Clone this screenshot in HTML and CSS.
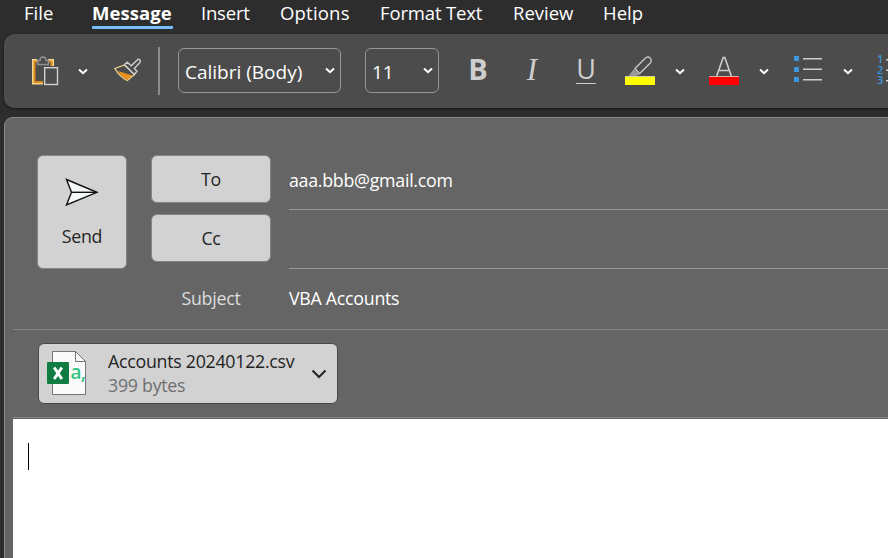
FILE: index.html
```html
<!DOCTYPE html>
<html lang="en">
<head>
<meta charset="utf-8">
<title>VBA Accounts - Message</title>
<link rel="stylesheet" href="styles.css">
</head>
<body>
<nav class="menu">
  <span class="tab file">File</span>
  <span class="tab message active">Message</span>
  <span class="tab insert">Insert</span>
  <span class="tab options">Options</span>
  <span class="tab format">Format Text</span>
  <span class="tab review">Review</span>
  <span class="tab help">Help</span>
</nav>
<div class="ribbon">
  <svg class="paste" width="30" height="32" viewBox="30 55 30 32">
    <path d="M37 60.500H33.500V83H43M48 60.500H52.500V66" fill="none" stroke="#f7d78b" stroke-width="3"/>
    <path d="M37 61.500H34.500V82H43M48 61.500H51.500V66" fill="none" stroke="#dc8a1c" stroke-width="2"/>
    <path d="M37.600 64.500V60.500H40C40 55.700 46 55.700 46 60.500H48.400V64.500Z" fill="#4c4c4c" stroke="#919191" stroke-width="1.500"/>
    <rect x="44.700" y="67.700" width="12.800" height="16.800" fill="#4c4c4c" stroke="#d2d2d2" stroke-width="1.400"/>
  </svg>
  <svg class="chev c1" width="10" height="7" viewBox="0 0 10 7"><path d="M1 1.500L5 5.200L9 1.500"/></svg>
  <svg class="brush" width="30" height="28" viewBox="113 57 30 28">
    <path d="M114.800 68.500L124.500 65L134.500 74.500L127.200 80.500Q119.500 76.500 114.800 68.500Z" fill="#4c4c4c" stroke="#f5d58e" stroke-width="1.300"/>
    <path d="M118 71L132.500 75.500L127.200 80Q121.500 77.200 118 71Z" fill="#e8921e"/>
    <path d="M124.500 64.500L127.300 62.200L131.200 65.700L137.200 59.900C139 58.300 141.500 60.800 139.900 62.600L134.300 68.500L137 71.300L134.300 74.500Z" fill="#4c4c4c" stroke="#cfcfcf" stroke-width="1.400"/>
  </svg>
  <i class="rule"></i>
  <div class="combo font"><span>Calibri (Body)</span><svg class="chev" width="10" height="7" viewBox="0 0 10 7"><path d="M1 1.500L5 5.200L9 1.500"/></svg></div>
  <div class="combo size"><span>11</span><svg class="chev" width="10" height="7" viewBox="0 0 10 7"><path d="M1 1.500L5 5.200L9 1.500"/></svg></div>
  <span class="glyph bold">B</span>
  <span class="glyph italic">I</span>
  <span class="glyph under">U</span>
  <svg class="marker" width="30" height="30" viewBox="625 55 30 30">
    <path d="M635 68.500L645 58.500C648.500 54.800 653.500 59.500 650 63.200L639.500 73.800Z" fill="none" stroke="#c8c8c8" stroke-width="1.400"/>
    <path d="M633.800 69L639.500 74.500L636.500 76H628.500Z" fill="#999"/>
    <path d="M625 76.500H655" stroke="#d0d0a0"/><path d="M625 77H655V85H625Z" fill="#ff0"/>
  </svg>
  <svg class="chev c2" width="10" height="7" viewBox="0 0 10 7"><path d="M1 1.500L5 5.200L9 1.500"/></svg>
  <svg class="color" width="30" height="30" viewBox="709 55 30 30">
    <path d="M716.700 76L723.200 57.500H724.800L731.300 76M719 70.500H729" fill="none" stroke="#cecece" stroke-width="1.600"/>
    <path d="M709 76.500H739" stroke="#d7b0b0"/><path d="M709 77H739V85H709Z" fill="red"/>
  </svg>
  <svg class="chev c3" width="10" height="7" viewBox="0 0 10 7"><path d="M1 1.500L5 5.200L9 1.500"/></svg>
  <svg class="bullets" width="28" height="28" viewBox="794 56 28 28">
    <path d="M794 56H799V61H794ZM794 67H799V72H794ZM794 77H799V82H794Z" fill="#3a96dd"/>
    <path d="M803 58.800H822M803 69.200H822M803 79.800H822" stroke="#cfcfcf" stroke-width="1.500"/>
  </svg>
  <svg class="chev c4" width="10" height="7" viewBox="0 0 10 7"><path d="M1 1.500L5 5.200L9 1.500"/></svg>
  <div class="numbers"><span>1</span><span>2</span><span>3</span></div>
  <svg class="ticks" width="3" height="28" viewBox="0 0 3 28"><path d="M0 3.800H3M0 14.200H3M0 24.800H3" stroke="#cfcfcf" stroke-width="1.500"/></svg>
</div>
<main class="compose">
  <section class="header">
    <div class="send">
      <svg width="34" height="30" viewBox="65 177 34 30"><path d="M66.500 179.500L97 192.300L66.500 205L71.500 192.300Z" fill="#f5f8f8" stroke="#111" stroke-width="1.400"/><path d="M71.500 192.300H96" stroke="#111" stroke-width="1.400"/></svg>
      <span>Send</span>
    </div>
    <div class="labels">
      <div class="btn">To</div>
      <div class="btn">Cc</div>
      <div class="subject">Subject</div>
    </div>
    <div class="fields">
      <div class="field"><span class="addr">aaa.bbb@gmail.com</span></div>
      <div class="field"></div>
      <div class="field last"><span class="title">VBA Accounts</span></div>
    </div>
  </section>
  <section class="attachments">
    <div class="card">
      <svg width="41" height="46" viewBox="46 350 41 46">
        <path d="M52.500 350.500H75.500L85.500 360.500V393.500H52.500Z" fill="#fafafa" stroke="#757575"/>
        <path d="M75.500 350.500V360.500H85.500" fill="none" stroke="#757575"/>
        <rect x="47" y="361" width="22" height="22" rx="1" fill="#107c41"/>
        <path d="M54.200 366.500L61.800 378M61.800 366.500L54.200 378" stroke="#fff" stroke-width="3"/>
        <text x="70.500" y="377.500" class="csv">a,</text>
      </svg>
      <div class="meta"><span class="name">Accounts 20240122.csv</span><span class="bytes">399 bytes</span></div>
      <svg class="open" width="16" height="10" viewBox="0 0 16 10"><path d="M1.500 1.500L8 8L14.500 1.500"/></svg>
    </div>
  </section>
  <div class="body"><i class="caret"></i></div>
</main>
</body>
</html>
```
FILE: styles.css
```css
* { box-sizing: border-box; }
body { margin: 0; width: 888px; height: 558px; overflow: hidden; background: #2d2d2d; color: #fff; font: 18.5px/26px "Open Sans", "Noto Sans", sans-serif; }
span { white-space: nowrap; display: block; }
svg { display: block; flex: none; }
.menu { height: 34px; display: flex; padding-left: 24px; }
.tab { height: 29px; flex: none; }
.file { width: 68px; }
.message { width: 81px; font-weight: 700; letter-spacing: .05px; margin-right: 28px; }
.active { border-bottom: 3px solid #76bdfa; border-radius: 1px; }
.insert { width: 79px; letter-spacing: -.2px; }
.options { width: 100px; letter-spacing: .2px; }
.format { width: 133px; letter-spacing: -.15px; }
.review { width: 90px; }
.ribbon { margin-left: 4px; height: 74px; background: #4c4c4c; border-radius: 10px 0 0 10px; box-shadow: 0 1px 3px #151515; display: flex; align-items: center; overflow: hidden; }
.ribbon > * { flex: none; }
.chev path, .open path { fill: none; stroke: #fff; stroke-width: 2; }
.paste { margin-left: 26px; }
.c1 { margin-left: 18px; }
.brush { margin-left: 25px; }
.rule { width: 2px; height: 48px; background: #8b8b8b; margin-left: 15px; }
.combo { height: 45px; margin-bottom: 1px; border: 1px solid #979797; border-radius: 6px; display: flex; align-items: center; justify-content: space-between; padding: 2px 5px 0 6px; font-size: 19px; }
.combo .chev { position: relative; top: -1px; }
.font { width: 163px; margin-left: 18px; }
.size { width: 74px; margin-left: 24px; }
.glyph { color: #cecece; line-height: 34px; text-align: center; font-size: 29px; height: 38px; }
.bold { font-weight: 700; width: 24px; margin-left: 27px; }
.italic { font-family: "Liberation Serif", serif; font-style: italic; font-size: 31px; line-height: 35px; width: 24px; margin-left: 30px; }
.under { font-size: 27px; width: 20px; margin-left: 32px; text-decoration: underline; text-decoration-thickness: 1px; text-underline-offset: 4px; }
.marker { margin-left: 29px; margin-bottom: 2px; }
.c2, .c3 { margin-left: 20px; }
.color { margin-left: 24px; margin-bottom: 2px; }
.bullets { margin-left: 25px; margin-bottom: 2px; }
.c4 { margin-left: 21px; }
.numbers { color: #3a96dd; font-size: 11px; font-weight: 600; line-height: 10.500px; margin: 0 0 2px 24px; width: 9px; }
.ticks { margin-bottom: 2px; }
.compose { margin: 9px 0 0 4px; height: 441px; background: #656565; border: solid #8a8a8a; border-width: 1px 0 0 1px; border-radius: 9px 0 0 0; padding-left: 8px; font-size: 17.8px; letter-spacing: -.27px; }
.header { height: 212px; border-bottom: 1px solid #858585; display: flex; padding: 37px 0 0 24px; }
.send, .btn { background: #d2d2d2; color: #242424; border: 1px solid #858585; border-radius: 6px; }
.send { width: 90px; height: 114px; display: flex; flex-direction: column; align-items: center; padding-top: 21px; gap: 16px; }
.labels { width: 120px; margin-left: 24px; text-align: center; }
.btn { height: 48px; line-height: 47px; margin-bottom: 11px; }
.subject { color: #ddd; line-height: 50px; }
.fields { flex: 1; margin-left: 18px; }
.field { height: 59px; border-bottom: 1px solid #989898; padding-top: 12px; }
.field:first-child { height: 55px; }
.last { border: 0; padding-top: 16px; }
.attachments { height: 88px; border-bottom: 1px solid #858585; padding: 13px 0 0 25px; }
.card { width: 300px; height: 61px; background: #d2d2d2; border: 1px solid #484848; border-radius: 6px; display: flex; align-items: center; padding: 0 10px 0 7px; color: #242424; }
.meta { flex: 1; margin: 0 0 2px 21px; line-height: 24px; }
.bytes { color: #707070; }
.open path { stroke: #242424; }
.csv { font: 600 19px "Open Sans", sans-serif; fill: #33c481; letter-spacing: -.7px; }
.body { height: 140px; margin-top: 1px; background: #fff; padding: 24px 0 0 15px; }
.caret { display: block; width: 1px; height: 27px; background: #000; }
```
